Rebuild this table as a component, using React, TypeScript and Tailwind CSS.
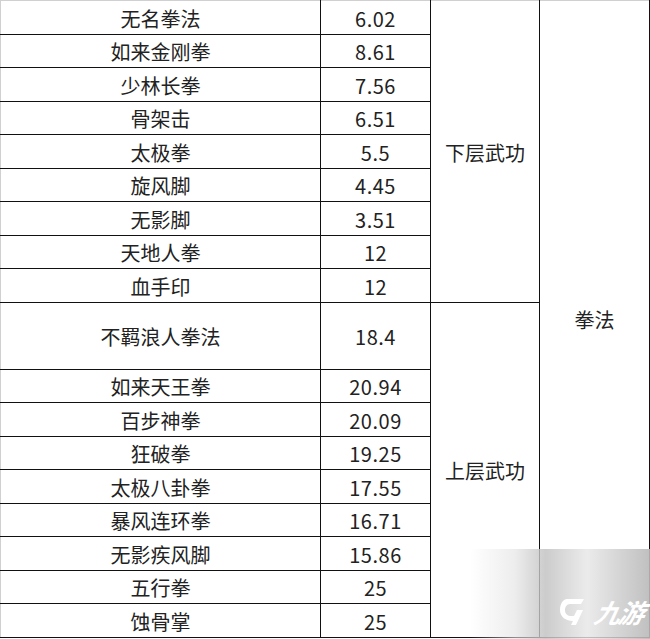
import React from "react";

const lower: [string, string][] = [
  ["无名拳法", "6.02"],
  ["如来金刚拳", "8.61"],
  ["少林长拳", "7.56"],
  ["骨架击", "6.51"],
  ["太极拳", "5.5"],
  ["旋风脚", "4.45"],
  ["无影脚", "3.51"],
  ["天地人拳", "12"],
  ["血手印", "12"],
];

const upper: [string, string, boolean][] = [
  ["不羁浪人拳法", "18.4", true],
  ["如来天王拳", "20.94", false],
  ["百步神拳", "20.09", false],
  ["狂破拳", "19.25", false],
  ["太极八卦拳", "17.55", false],
  ["暴风连环拳", "16.71", false],
  ["无影疾风脚", "15.86", false],
  ["五行拳", "25", false],
  ["蚀骨掌", "25", false],
];

const cell =
  "border-b border-r border-[#111] text-center align-middle p-0 pt-[3px] leading-none";
const num = `${cell} tracking-[0.5px]`;

export default function App() {
  return (
    <div
      className="relative w-[650px] h-[639px] bg-white overflow-hidden text-[20px] text-[#222]"
      style={{ fontFamily: '"Noto Sans CJK SC", "Noto Sans", sans-serif' }}
    >
      <table className="border-collapse table-fixed w-[649px] border-t border-t-[#d0d0d0]">
        <colgroup>
          <col className="w-[320px]" />
          <col className="w-[110px]" />
          <col className="w-[109px]" />
          <col className="w-[110px]" />
        </colgroup>
        <tbody>
          {lower.map(([n, v], i) => (
            <tr key={n} className="h-[33.5px]">
              <td className={`${cell} border-l border-l-[#d0d0d0]`}>{n}</td>
              <td className={num}>{v}</td>
              {i === 0 && (
                <>
                  <td className={cell} rowSpan={9}>
                    下层武功
                  </td>
                  <td className={cell} rowSpan={19}>
                    拳法
                  </td>
                </>
              )}
            </tr>
          ))}
          {upper.map(([n, v, tall], i) => (
            <tr key={n} className={tall ? "h-[67px]" : "h-[33.5px]"}>
              <td className={`${cell} border-l border-l-[#d0d0d0]`}>{n}</td>
              <td className={num}>{v}</td>
              {i === 0 && (
                <td className={cell} rowSpan={10}>
                  上层武功
                </td>
              )}
            </tr>
          ))}
        </tbody>
      </table>

      <div className="absolute left-[470px] top-[549px] w-[180px] h-[90px] bg-[linear-gradient(90deg,rgba(255,255,255,0)_0%,rgba(225,225,225,0.6)_25%,rgba(195,195,195,0.85)_42%,rgba(230,230,230,0.8)_65%,rgba(185,185,185,0.9)_100%)]">
        <div className="absolute left-[88px] top-[46px] flex items-center gap-[3px]">
          <svg width="34" height="34" viewBox="0 0 34 34" fill="none">
            <path
              d="M9 4 L26 4 L23 9 L12 9 C9 9 7 12 7 15 C7 19 10 21 13 21 L16 21 L19 15 L25 15 L18 30 L13 30 L15 26 C8 26 2 22 2 15 C2 9 5 4 9 4 Z"
              fill="white"
            />
          </svg>
          <span
            className="text-white text-[26px] font-bold italic leading-none tracking-[-2px]"
            style={{ transform: "skewX(-12deg)" }}
          >
            九游
          </span>
        </div>
      </div>
    </div>
  );
}
